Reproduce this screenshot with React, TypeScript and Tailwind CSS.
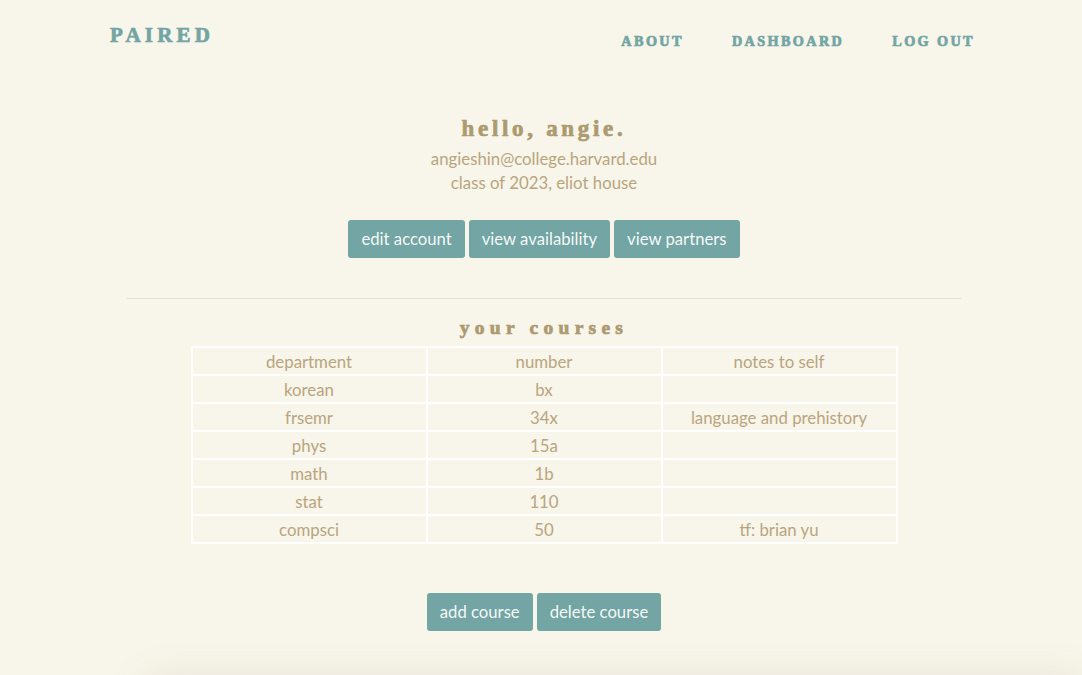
import * as React from "react";

const courses = [
  { dept: "korean", num: "bx", notes: "" },
  { dept: "frsemr", num: "34x", notes: "language and prehistory" },
  { dept: "phys", num: "15a", notes: "" },
  { dept: "math", num: "1b", notes: "" },
  { dept: "stat", num: "110", notes: "" },
  { dept: "compsci", num: "50", notes: "tf: brian yu" },
];

const serif =
  "font-['Liberation_Serif',serif] font-bold [-webkit-text-stroke:0.7px_currentColor]";
const btn =
  "h-[38px] rounded-[3px] bg-[#72a5a3] px-[13px] text-[16.7px] text-white/95";

function Cell({ children }: { children?: React.ReactNode }) {
  return (
    <td className="h-[28px] border-2 border-white p-0 text-center align-middle">
      {children}
    </td>
  );
}

export default function App() {
  return (
    <div className="h-[675px] overflow-hidden bg-[#f8f5ea] font-['Lato',sans-serif] text-[16.8px] text-[#b8a57e]">
      <header className="flex items-start justify-between pl-[110px] pr-[107px] pt-[20px]">
        <div className={`${serif} text-[21px] tracking-[0.2em] text-[#72a5a3]`}>
          PAIRED
        </div>
        <nav className={`${serif} mt-[11px] flex gap-[48px] text-[14.2px] tracking-[0.17em] text-[#72a5a3]`}>
          <a>ABOUT</a>
          <a>DASHBOARD</a>
          <a>LOG OUT</a>
        </nav>
      </header>

      <main className="mx-auto flex w-[834px] translate-x-[3px] flex-col items-center pt-[62px]">
        <h1 className={`${serif} text-[23px] leading-[30px] tracking-[0.16em] text-[#ad9a6f]`}>
          hello, angie.
        </h1>
        <p className="mt-[3px] leading-[24px]">angieshin@college.harvard.edu</p>
        <p className="leading-[24px]">class of 2023, eliot house</p>

        <div className="mt-[25px] flex gap-[4px]">
          <button className={btn}>edit account</button>
          <button className={btn}>view availability</button>
          <button className={btn}>view partners</button>
        </div>

        <hr className="mt-[40px] w-full border-t border-[#e2ded0]" />

        <h2 className={`${serif} mt-[16px] text-[19.5px] leading-[26px] tracking-[0.27em] text-[#ad9a6f]`}>
          your courses
        </h2>

        <table className="mt-[5px] w-[707px] table-fixed border-collapse">
          <thead>
            <tr>
              <Cell>department</Cell>
              <Cell>number</Cell>
              <Cell>notes to self</Cell>
            </tr>
          </thead>
          <tbody>
            {courses.map((c) => (
              <tr key={c.dept}>
                <Cell>{c.dept}</Cell>
                <Cell>{c.num}</Cell>
                <Cell>{c.notes}</Cell>
              </tr>
            ))}
          </tbody>
        </table>

        <div className="mt-[49px] flex gap-[4px]">
          <button className={btn}>add course</button>
          <button className={btn}>delete course</button>
        </div>
      </main>

      <div className="mt-[46px] ml-[140px] h-[40px] rounded-tl-[24px] shadow-[0_0_40px_rgba(120,110,80,0.12)]" />
    </div>
  );
}
